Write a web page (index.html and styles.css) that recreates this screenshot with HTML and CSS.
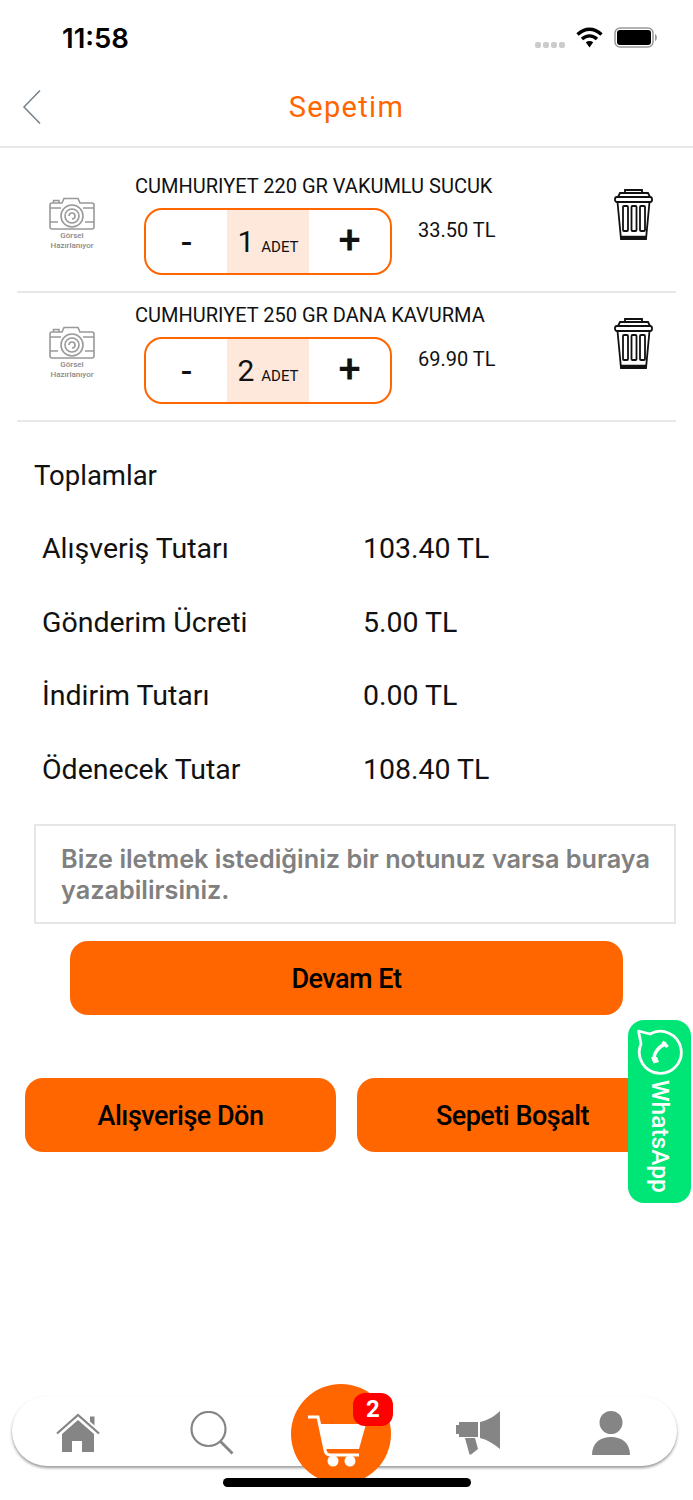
FILE: index.html
```html
<!DOCTYPE html>
<html lang="tr">
<head>
    <meta charset="UTF-8">
    <meta name="viewport" content="width=device-width, initial-scale=1.0">
    <title>Sepetim</title>
    <link rel="stylesheet" href="styles.css">
</head>
<body>
    <div class="page">
        <div class="status-bar">
            <span class="clock">11:58</span>
            <div class="status-icons">
                <span class="signal"><i></i><i></i><i></i><i></i></span>
                <svg class="wifi" width="27" height="21" viewBox="0 0 27 21"><path d="M1.500 7.500C9 0.500 18 0.500 25.500 7.500M6 12C10.500 7.800 16.500 7.800 21 12" fill="none" stroke="#000" stroke-width="3.400"/><path d="M9.800 15.200C12 13.500 15 13.500 17.200 15.200L13.500 20.500Z" fill="#000"/></svg>
                <svg class="battery" width="44" height="21" viewBox="0 0 44 21"><rect x="1" y="1" width="38" height="19" rx="5" fill="#fff" stroke="#999" stroke-width="1.500"/><rect x="3" y="3" width="34" height="15" rx="3" fill="#000"/><path d="M41 7C43.500 7.500 43.500 13.500 41 14Z" fill="#999"/></svg>
            </div>
        </div>

        <header class="top-bar">
            <svg class="back" width="20" height="36" viewBox="0 0 20 36"><path d="M18 1.500L2 18L18 34.500" fill="none" stroke="#75808c" stroke-width="1.500"/></svg>
            <h1>Sepetim</h1>
        </header>

        <div class="cart-list">
            <div class="cart-item">
                <div class="thumb">
                    <svg width="46" height="34" viewBox="0 0 46 34"><use href="#camera"/></svg>
                    <span>Görsel<br>Hazırlanıyor</span>
                </div>
                <div class="item-main">
                    <div class="item-title">CUMHURIYET 220 GR VAKUMLU SUCUK</div>
                    <div class="item-controls">
                        <div class="qty">
                            <span class="qty-btn minus">-</span>
                            <span class="qty-value"><b>1</b> <small>ADET</small></span>
                            <span class="qty-btn plus">+</span>
                        </div>
                        <span class="item-price">33.50 TL</span>
                    </div>
                </div>
                <svg class="trash" width="42" height="52" viewBox="0 0 42 52"><use href="#trash"/></svg>
            </div>
            <div class="cart-item">
                <div class="thumb">
                    <svg width="46" height="34" viewBox="0 0 46 34"><use href="#camera"/></svg>
                    <span>Görsel<br>Hazırlanıyor</span>
                </div>
                <div class="item-main">
                    <div class="item-title">CUMHURIYET 250 GR DANA KAVURMA</div>
                    <div class="item-controls">
                        <div class="qty">
                            <span class="qty-btn minus">-</span>
                            <span class="qty-value"><b>2</b> <small>ADET</small></span>
                            <span class="qty-btn plus">+</span>
                        </div>
                        <span class="item-price">69.90 TL</span>
                    </div>
                </div>
                <svg class="trash" width="42" height="52" viewBox="0 0 42 52"><use href="#trash"/></svg>
            </div>
        </div>

        <h2 class="totals-title">Toplamlar</h2>
        <div class="totals">
            <div class="total-row"><span>Alışveriş Tutarı</span><span>103.40 TL</span></div>
            <div class="total-row"><span>Gönderim Ücreti</span><span>5.00 TL</span></div>
            <div class="total-row"><span>İndirim Tutarı</span><span>0.00 TL</span></div>
            <div class="total-row"><span>Ödenecek Tutar</span><span>108.40 TL</span></div>
        </div>

        <div class="note">Bize iletmek istediğiniz bir notunuz varsa buraya yazabilirsiniz.</div>

        <button class="btn btn-continue">Devam Et</button>
        <div class="btn-row">
            <button class="btn">Alışverişe Dön</button>
            <button class="btn">Sepeti Boşalt</button>
        </div>

        <nav class="tab-bar">
            <svg class="tab-home" width="44" height="40" viewBox="0 0 44 40"><path d="M1 20.500L22 2L43 20.500" fill="none" stroke="#858585" stroke-width="2.200"/><path d="M34 3.500H38.500V12.500L34 8.500Z" fill="#858585"/><path d="M6 21L22 7L38 21V39H26V28H16V39H6Z" fill="#858585"/></svg>
            <svg width="44" height="44" viewBox="0 0 44 44"><circle cx="18.500" cy="18" r="17" fill="none" stroke="#858585" stroke-width="2.200"/><path d="M30.500 30.500L42.500 42.500" stroke="#858585" stroke-width="2.800" fill="none"/></svg>
            <span class="tab-gap"></span>
            <svg width="44" height="44" viewBox="0 0 44 44"><path d="M0 14H3V11H22V26H3V23H0Z" fill="#858585"/><path d="M24 11C32 9 39 5 44 0V38C38 33 32 29 24 27Z" fill="#858585"/><path d="M9 27H19L22 38L15 43.500H13.500Z" fill="#858585"/></svg>
            <svg width="40" height="44" viewBox="0 0 40 44"><circle cx="20" cy="11.500" r="11.500" fill="#858585"/><path d="M1 44C1 32 9 26 20 26S39 32 39 44Z" fill="#858585"/></svg>
            <div class="cart-fab">
                <svg width="100" height="100" viewBox="0 0 100 100"><path d="M17 33H27L34 66Q35 71 39 71H68" fill="none" stroke="#fff" stroke-width="3"/><path d="M29 40H75L68 65H34Z" fill="#fff"/><circle cx="42" cy="77" r="5.500" fill="#fff"/><circle cx="59" cy="77" r="5.500" fill="#fff"/></svg>
                <span class="cart-badge">2</span>
            </div>
        </nav>
        <div class="home-indicator"></div>

        <div class="whatsapp">
            <svg width="48" height="48" viewBox="0 0 48 48"><path d="M2.500 4L14 7A21 21 0 1 1 5 17Z" fill="none" stroke="#fff" stroke-width="2.800" stroke-linejoin="round"/><path d="M30.500 16.500C23 19 16.500 27 18.500 33.500" fill="none" stroke="#fff" stroke-width="3.500"/><path d="M27.500 13.500L33 19L30 21L25.500 16Z M15 30L21 30L23 35L17.500 36.500Z" fill="#fff"/></svg>
            <span>WhatsApp</span>
        </div>
    </div>

    <svg class="defs" width="0" height="0">
        <defs>
            <g id="camera" fill="none" stroke="#999" stroke-width="1.600">
                <path d="M3 6H13L15 1.500H29L31 6H43Q45 6 45 8V30Q45 32 43 32H3Q1 32 1 30V8Q1 6 3 6Z"/>
                <path d="M4.500 6V3.500H10V6"/>
                <path d="M1 11H12M34 11H45M1 25H9M36 25H45"/>
                <circle cx="23" cy="19" r="11"/>
                <circle cx="23" cy="19" r="7"/>
                <path d="M20 19A3 3 0 1 1 23 22"/>
            </g>
            <g id="trash" fill="none" stroke="#111" stroke-width="1.800">
                <path d="M12 5V2H29V5"/>
                <path d="M5 9L7 5H35L37 9"/>
                <rect x="2" y="9" width="37" height="5" rx="2"/>
                <path d="M4.500 14L8 51H33L36.500 14"/>
                <path d="M7.500 49H33.500" stroke-width="2.500"/>
                <rect x="10" y="18" width="5" height="25" rx="1"/>
                <rect x="18.500" y="18" width="5" height="25" rx="1"/>
                <rect x="27" y="18" width="5" height="25" rx="1"/>
            </g>
        </defs>
    </svg>
</body>
</html>
```

FILE: styles.css
```css
* {
    box-sizing: border-box;
}
body {
    font-family: Roboto, Arial, sans-serif;
    margin: 0;
    padding: 0;
    background-color: #fff;
    color: #111;
}
.page {
    position: relative;
    width: 693px;
    height: 1500px;
    overflow: hidden;
    background: #fff;
}
.defs {
    position: absolute;
}

/* status bar */
.status-bar {
    height: 75px;
    display: flex;
    justify-content: space-between;
    align-items: center;
    padding: 0 35px 0 62px;
}
.clock {
    font-family: Inter, Roboto, sans-serif;
    font-size: 27.500px;
    font-weight: 600;
    color: #000;
    margin-top: 1px;
}
.status-icons {
    display: flex;
    align-items: center;
    gap: 11px;
}
.signal {
    display: flex;
    gap: 2px;
    margin-top: 14px;
}
.signal i {
    width: 6px;
    height: 6px;
    border-radius: 2px;
    background: #ccc;
}

/* header */
.top-bar {
    position: relative;
    height: 73px;
    display: flex;
    align-items: center;
    justify-content: center;
    border-bottom: 2px solid #e8e8e8;
}
.top-bar h1 {
    margin: 0 0 7px;
    font-size: 29px;
    font-weight: 400;
    letter-spacing: 1.300px;
    color: #ff6600;
}
.back {
    position: absolute;
    left: 22px;
    top: 14px;
}

/* cart rows */
.cart-list {
    margin: 0 17px 0 17px;
}
.cart-item {
    height: 129px;
    display: flex;
    border-bottom: 2px solid #e8e8e8;
    padding-top: 10px;
}
.cart-item:first-child {
    height: 145px;
    padding-top: 26px;
}
.thumb {
    width: 118px;
    padding: 23px 0 0 32px;
    display: flex;
    flex-direction: column;
    align-items: flex-start;
    color: #888;
    font-size: 8px;
    font-weight: 500;
    line-height: 10px;
}
.thumb span {
    width: 46px;
    text-align: center;
    white-space: nowrap;
}
.thumb svg {
    display: block;
}
.item-main {
    width: 470px;
}
.item-title {
    font-size: 20px;
    line-height: 24px;
    white-space: nowrap;
}
.item-controls {
    display: flex;
    margin: 10px 0 0 9px;
}
.qty {
    width: 248px;
    height: 67px;
    display: flex;
    border: 2px solid #ff6600;
    border-radius: 18px;
    overflow: hidden;
}
.qty-btn {
    width: 81px;
    display: flex;
    align-items: center;
    justify-content: center;
    font-size: 34px;
    font-weight: 500;
}
.qty-btn.plus {
    font-size: 40px;
    margin-top: -2px;
}
.qty-value {
    width: 82px;
    display: flex;
    align-items: baseline;
    justify-content: center;
    gap: 7px;
    padding-top: 14px;
    background: #fee8db;
}
.qty-value b {
    font-size: 30px;
    font-weight: 400;
}
.qty-value small {
    font-size: 15px;
}
.item-price {
    margin: 10px 0 0 26px;
    font-size: 20px;
    line-height: 24px;
}
.trash {
    margin: 14px 0 0 8px;
}

/* totals */
.totals-title {
    margin: 36px 0 0 34px;
    font-size: 27.500px;
    line-height: 36px;
    font-weight: 400;
}
.totals {
    margin: 18px 0 0 42px;
}
.total-row {
    height: 73.500px;
    display: flex;
    align-items: center;
    font-size: 28.500px;
}
.total-row span:first-child {
    width: 321px;
}

/* note and buttons */
.note {
    height: 100px;
    margin: 18px 17px 0 34px;
    padding: 18px 6px 0 25px;
    border: 2px solid #e6e6e6;
    font-family: Inter, Arial, sans-serif;
    font-size: 25.250px;
    line-height: 31px;
    font-weight: 600;
    color: #808080;
}
.btn {
    display: block;
    height: 74px;
    padding: 2px 0 0;
    border: none;
    border-radius: 18px;
    background: #ff6600;
    color: #000;
    font-family: Roboto, Arial, sans-serif;
    font-size: 27px;
    font-weight: 500;
    letter-spacing: -0.500px;
}
.btn-continue {
    width: 553px;
    margin: 17px 0 0 70px;
}
.btn-row {
    display: flex;
    gap: 21px;
    margin: 63px 0 0 25px;
}
.btn-row .btn {
    width: 311px;
}

/* bottom nav */
.tab-bar {
    position: absolute;
    left: 12px;
    top: 1396px;
    width: 665px;
    height: 70px;
    display: grid;
    grid-template-columns: repeat(5, 133px);
    align-items: center;
    justify-items: center;
    padding-top: 3px;
    background: #fff;
    border-radius: 36px;
    box-shadow: 0 2px 3px rgba(0, 0, 0, 0.4);
}
.tab-home {
    margin-right: 2px;
}
.tab-gap {
    width: 46px;
}
.cart-fab {
    position: absolute;
    left: 279px;
    top: -12px;
    width: 100px;
    height: 100px;
    border-radius: 50%;
    background: #ff6600;
}
.cart-fab svg {
    display: block;
}
.cart-badge {
    position: absolute;
    left: 62px;
    top: 9px;
    width: 40px;
    height: 33px;
    border-radius: 12px;
    background: #f00;
    color: #fff;
    font-size: 24px;
    font-weight: 700;
    line-height: 32px;
    text-align: center;
}
.home-indicator {
    position: absolute;
    left: 223px;
    top: 1478px;
    width: 248px;
    height: 9px;
    border-radius: 5px;
    background: #000;
}

/* whatsapp tab */
.whatsapp {
    position: absolute;
    left: 628px;
    top: 1020px;
    width: 63px;
    height: 183px;
    display: flex;
    flex-direction: column;
    align-items: center;
    padding-top: 7px;
    border-radius: 16px;
    background: #00e676;
    color: #fff;
}
.whatsapp span {
    margin-top: 5px;
    writing-mode: vertical-rl;
    font-size: 24.500px;
    font-weight: 500;
    line-height: 30px;
}
```
